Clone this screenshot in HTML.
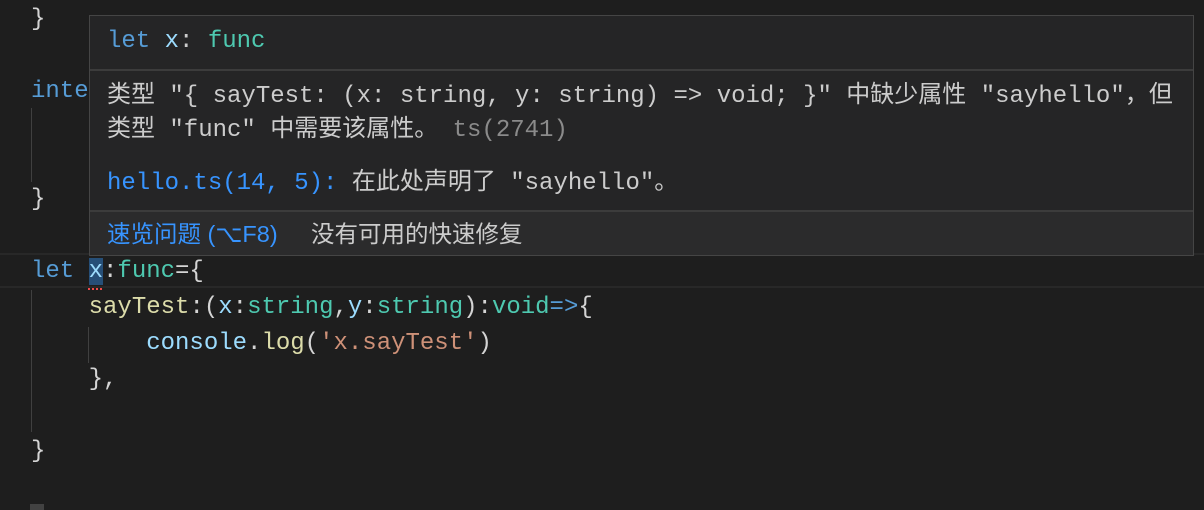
<!DOCTYPE html>
<html><head><meta charset="utf-8"><style>
body{margin:0;width:1204px;height:510px;background:#1e1e1e;overflow:hidden;position:relative;font-family:"Liberation Mono","Noto Sans CJK SC",monospace;font-size:24px;}
.l{position:absolute;left:31px;height:36px;line-height:36px;white-space:pre;color:#d4d4d4}
.k{color:#569cd6}.t{color:#4ec9b0}.v{color:#9cdcfe}.f{color:#dcdcaa}.s{color:#ce9178}.p{color:#d4d4d4}
.g{position:absolute;width:1px;background:#404040}
.tip{position:absolute;left:89px;top:15px;width:1105px;height:241px;background:#252526;border:1px solid #454545;box-sizing:border-box;color:#cccccc}
.tip div{position:absolute;left:17px;white-space:pre;line-height:34px}
</style></head><body>
<div style="position:absolute;left:0;top:253px;width:1204px;height:35px;border-top:2px solid #282828;border-bottom:2px solid #282828;box-sizing:border-box"></div>
<div class="g" style="left:31px;top:108px;height:74px"></div>
<div class="g" style="left:31px;top:290px;height:142px"></div>
<div class="g" style="left:88px;top:327px;height:36px"></div>
<div class="l" style="top:2px">}</div>
<div class="l k" style="top:74px">interface func{</div>
<div class="l" style="top:182px">}</div>
<div class="l" style="top:254px"><span class="k">let </span><span class="v" style="background:#264f78">x</span><span class="p">:</span><span class="t">func</span>={</div>
<div style="position:absolute;left:88px;top:285px;width:14px;height:3px;border-bottom:2px dotted #f14c4c"></div>
<div class="l" style="top:290px">    <span class="f">sayTest</span>:(<span class="v">x</span>:<span class="t">string</span>,<span class="v">y</span>:<span class="t">string</span>):<span class="t">void</span><span class="k">=&gt;</span>{</div>
<div class="l" style="top:326px">        <span class="v">console</span>.<span class="f">log</span>(<span class="s">'x.sayTest'</span>)</div>
<div class="l" style="top:362px">    },</div>
<div class="l" style="top:434px">}</div>
<div style="position:absolute;left:30px;top:504px;width:14px;height:6px;background:#424242"></div>
<div class="tip">
<div style="top:9px"><span class="k">let</span> <span class="v">x</span>: <span class="t">func</span></div>
<div style="position:absolute;left:0;top:53px;width:1103px;height:2px;background:#3c3c3c"></div>
<div style="top:64px">类型 "{ sayTest: (x: string, y: string) =&gt; void; }" 中缺少属性 "sayhello"，但</div>
<div style="top:98px">类型 "func" 中需要该属性。 <span style="color:#8b8b8b">ts(2741)</span></div>
<div style="top:151px"><span style="color:#3794ff">hello.ts(14, 5):</span> 在此处声明了 "sayhello"。</div>
<div style="position:absolute;left:0;top:194px;width:1103px;height:45px;background:#2b2b2c;border-top:2px solid #3c3c3c;box-sizing:border-box"></div>
<div style="top:201px;font-family:'Liberation Sans','Noto Sans CJK SC',sans-serif;font-size:23.5px"><span style="color:#3794ff">速览问题 (⌥F8)</span></div>
<div style="top:201px;left:221px;font-family:'Liberation Sans','Noto Sans CJK SC',sans-serif;font-size:23.5px">没有可用的快速修复</div>
</div>
</body></html>
